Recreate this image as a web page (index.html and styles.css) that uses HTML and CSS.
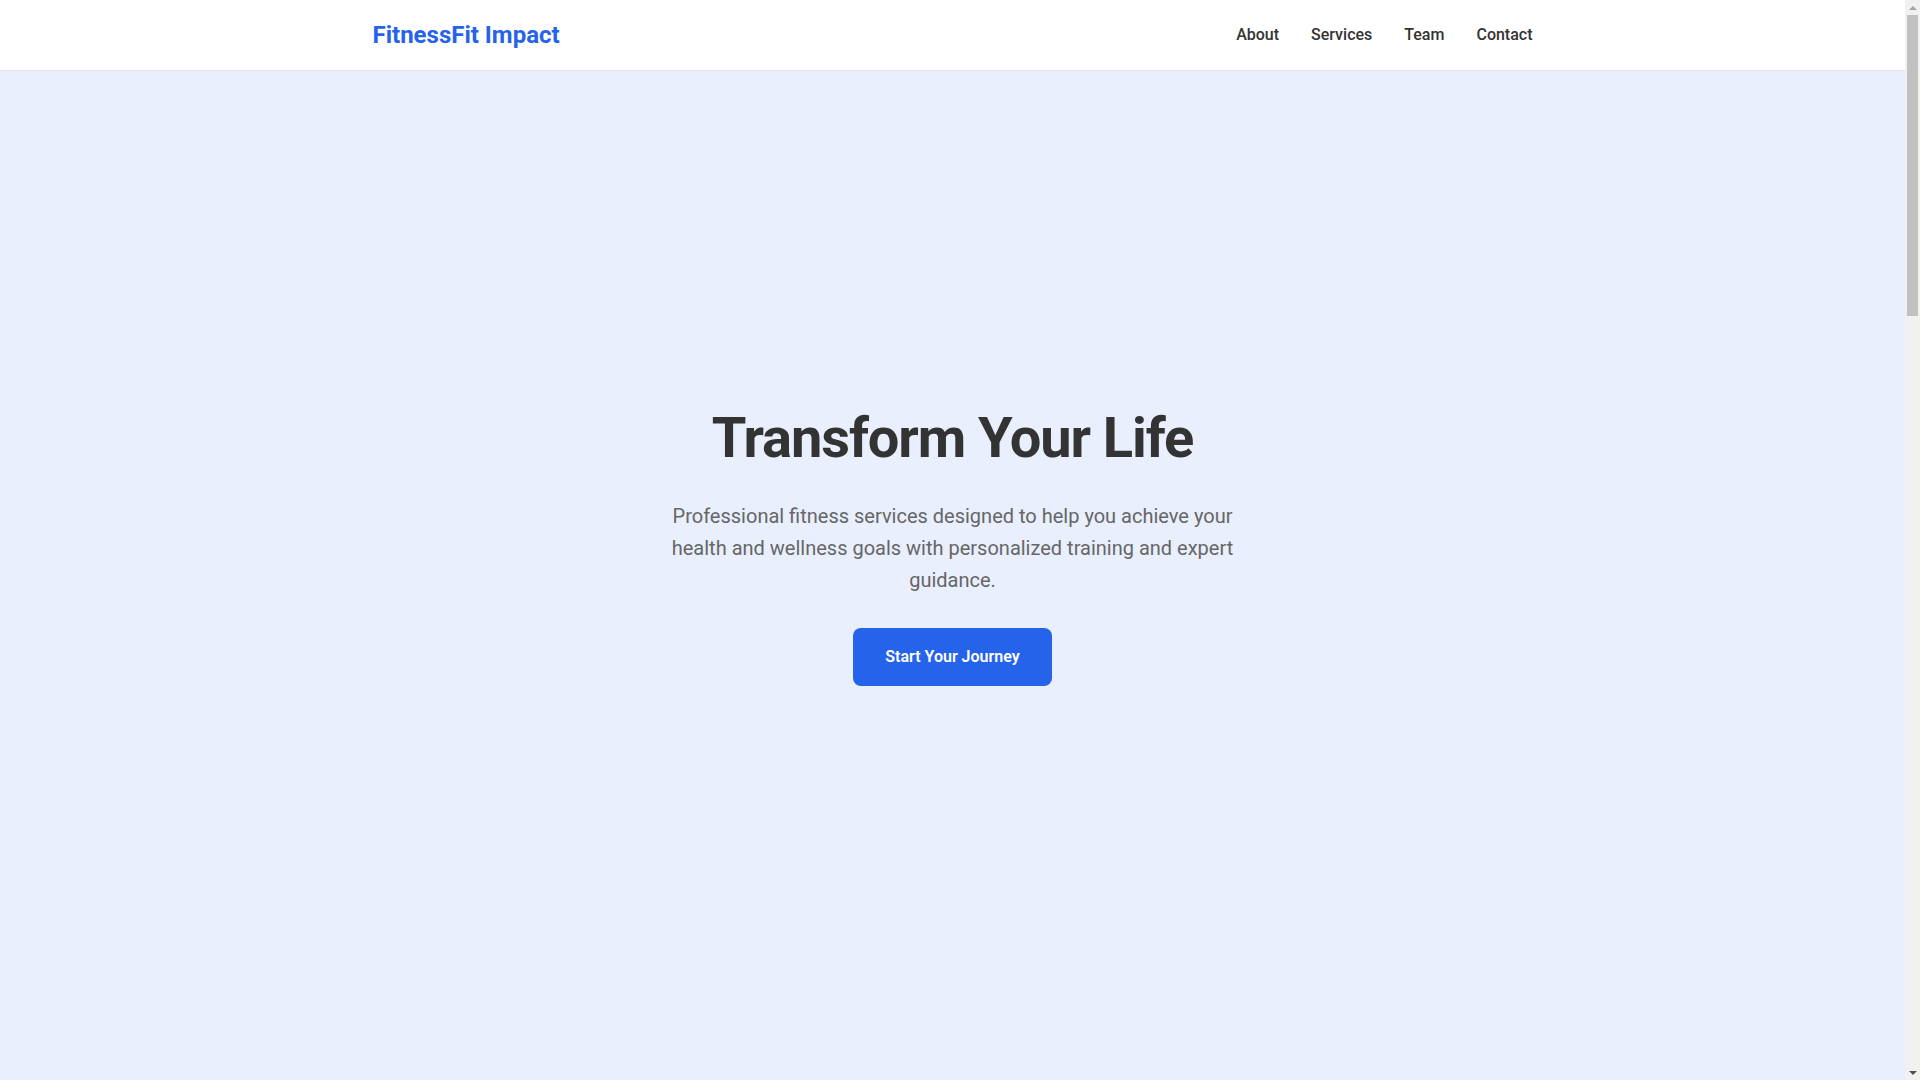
FILE: index.html
```html
<!DOCTYPE html>
<html lang="en">
<head>
<meta charset="utf-8">
<title>FitnessFit Impact</title>
<link rel="stylesheet" href="styles.css">
</head>
<body>
<div class="page">
<header class="site-header">
  <div class="container header-inner">
    <a class="logo" href="#">FitnessFit Impact</a>
    <nav class="nav">
      <a href="#about">About</a>
      <a href="#services">Services</a>
      <a href="#team">Team</a>
      <a href="#contact">Contact</a>
    </nav>
  </div>
</header>
<main>
  <section class="hero">
    <div class="hero-content">
      <h1 class="hero-title">Transform Your Life</h1>
      <p class="hero-text">Professional fitness services designed to help you achieve your health and wellness goals with personalized training and expert guidance.</p>
      <a class="btn" href="#contact">Start Your Journey</a>
    </div>
  </section>
</main>
</div>
<div class="scrollbar" aria-hidden="true">
  <div class="sb-btn"><span class="arrow-up"></span></div>
  <div class="sb-track"><div class="sb-thumb"></div></div>
  <div class="sb-btn"><span class="arrow-down"></span></div>
</div>
</body>
</html>
```

FILE: styles.css
```css
* { box-sizing: border-box; }
html, body {
  margin: 0;
  padding: 0;
  height: 100%;
  overflow: hidden;
}
body {
  font-family: Roboto, "Liberation Sans", Arial, sans-serif;
  line-height: 1.6;
  color: #333;
  background: #fff;
  display: flex;
}
.page {
  flex: 1;
  min-width: 0;
  height: 100vh;
  display: flex;
  flex-direction: column;
}
main {
  flex: 1;
  display: flex;
  flex-direction: column;
}
a { text-decoration: none; color: inherit; }
.container {
  max-width: 1200px;
  margin: 0 auto;
  padding: 0 20px;
  width: 100%;
}
.site-header {
  background: #fff;
  border-bottom: 1px solid #e5e5e5;
}
.header-inner {
  height: 70px;
  display: flex;
  align-items: center;
  justify-content: space-between;
}
.logo {
  font-size: 24px;
  font-weight: 700;
  color: #2563eb;
}
.nav {
  display: flex;
  gap: 32px;
}
.nav a {
  font-size: 16px;
  font-weight: 500;
  color: #333;
}
.hero {
  flex: 1;
  background: #e9effd;
  display: flex;
  align-items: center;
  justify-content: center;
  text-align: center;
  padding: 0 20px 60px;
}
.hero-content {
  max-width: 600px;
}
.hero-title {
  font-size: 56px;
  font-weight: 700;
  line-height: 1.2;
  letter-spacing: -1.1px;
  margin: 0 0 28px;
  color: #333;
}
.hero-text {
  font-size: 20px;
  color: #666;
  margin: 0 0 32px;
}
.btn {
  display: inline-block;
  background: #2563eb;
  color: #fff;
  font-size: 16px;
  font-weight: 600;
  padding: 16px 32px;
  border-radius: 8px;
}

/* classic scrollbar */
.scrollbar {
  flex: 0 0 15px;
  width: 15px;
  height: 100vh;
  background: #f1f1f1;
  display: flex;
  flex-direction: column;
}
.sb-btn {
  flex: 0 0 15px;
  display: flex;
  align-items: center;
  justify-content: center;
}
.arrow-up {
  width: 0;
  height: 0;
  border-left: 4px solid transparent;
  border-right: 4px solid transparent;
  border-bottom: 4px solid #a3a3a3;
}
.arrow-down {
  width: 0;
  height: 0;
  border-left: 4px solid transparent;
  border-right: 4px solid transparent;
  border-top: 4px solid #505050;
}
.sb-track {
  flex: 1;
  padding: 0 2px;
}
.sb-thumb {
  height: 301px;
  background: #c1c1c1;
}
```
